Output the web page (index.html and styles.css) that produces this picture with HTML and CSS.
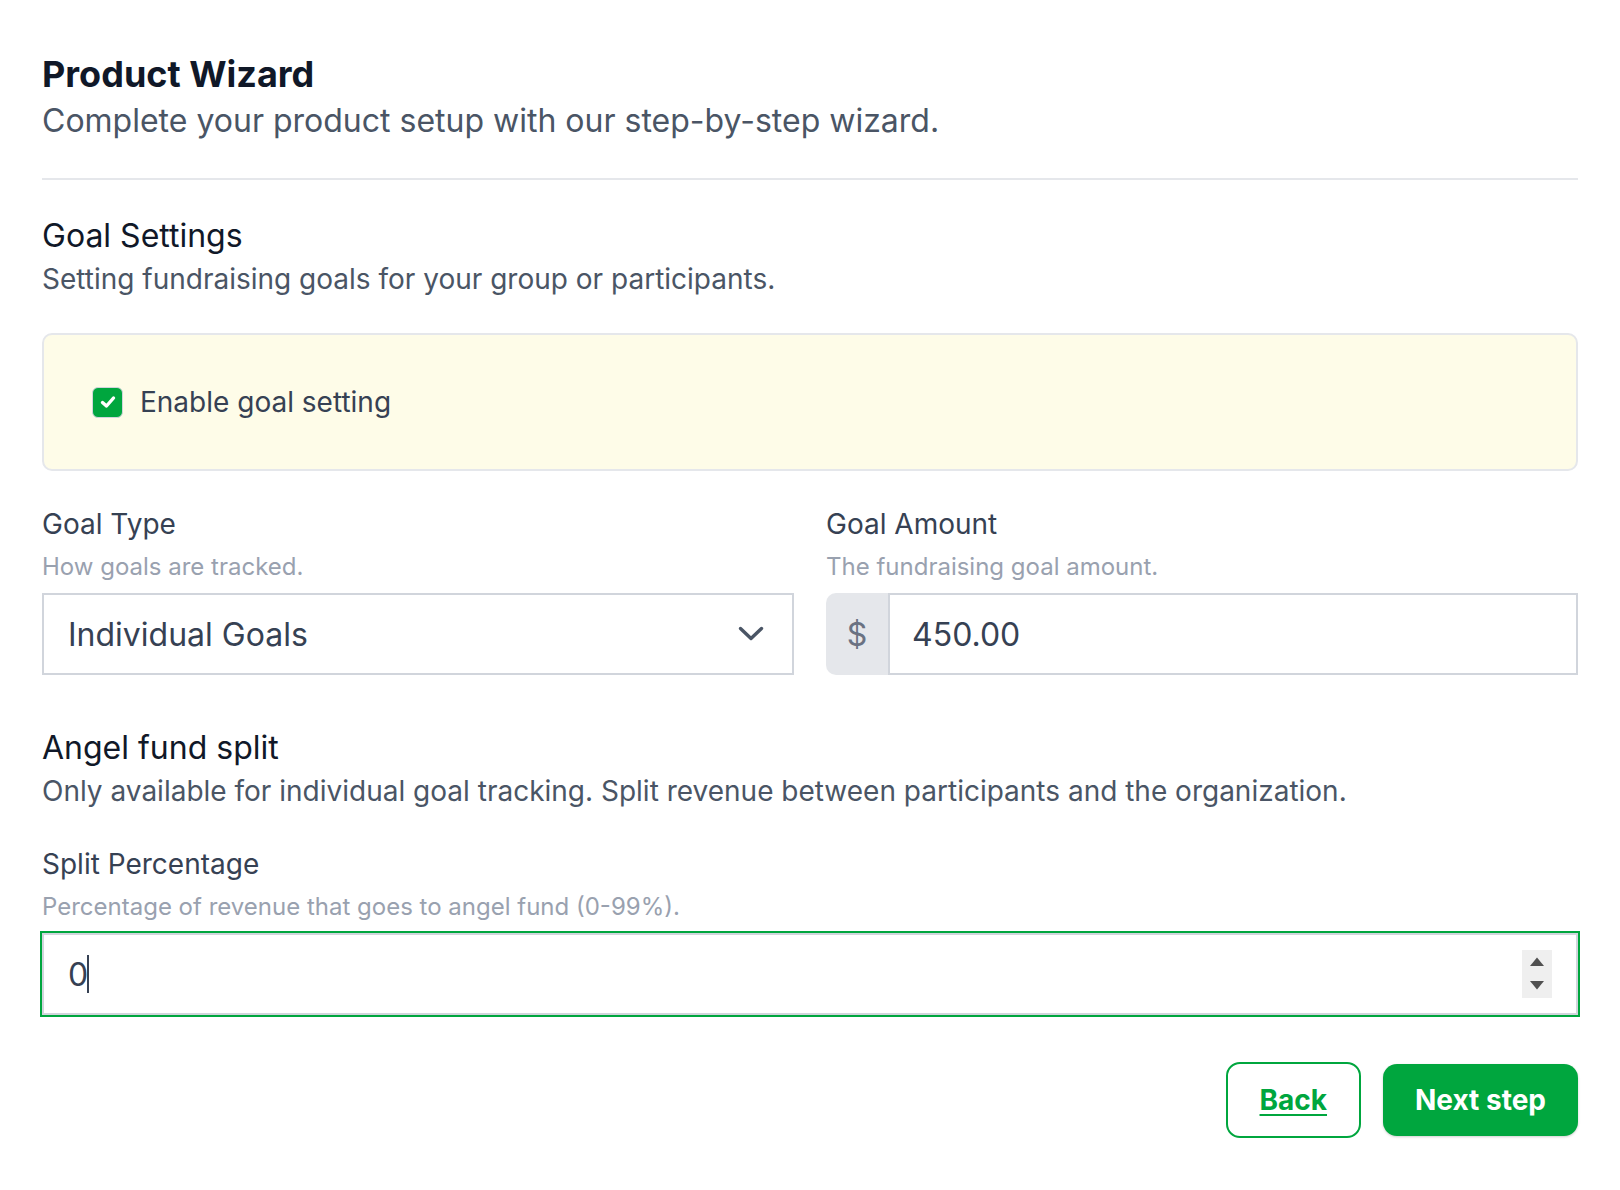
FILE: index.html
```html
<!DOCTYPE html>
<html lang="en">
<head>
<meta charset="utf-8">
<title>Product Wizard</title>
<link rel="stylesheet" href="styles.css">
</head>
<body>
<div class="page">
  <header class="header">
    <h1 class="title">Product Wizard</h1>
    <p class="subtitle">Complete your product setup with our step-by-step wizard.</p>
  </header>

  <section class="section">
    <h2 class="section-title">Goal Settings</h2>
    <p class="section-desc">Setting fundraising goals for your group or participants.</p>

    <div class="notice">
      <label class="check-row">
        <span class="checkbox">
          <svg width="20" height="20" viewBox="0 0 20 20" aria-hidden="true"><polyline points="4.5,10.5 8.5,14 15.5,6" fill="none" stroke="#ffffff" stroke-width="3.4" stroke-linecap="round" stroke-linejoin="round"/></svg>
        </span>
        <span class="check-label">Enable goal setting</span>
      </label>
    </div>

    <div class="grid">
      <div class="field">
        <div class="label">Goal Type</div>
        <div class="help">How goals are tracked.</div>
        <div class="control select">
          <span class="value">Individual Goals</span>
          <svg class="chevron" width="26" height="16" viewBox="0 0 26 16" aria-hidden="true"><polyline points="2.5,2.5 13,12.5 23.5,2.5" fill="none" stroke="#4a5565" stroke-width="3.4" stroke-linecap="round" stroke-linejoin="round"/></svg>
        </div>
      </div>
      <div class="field">
        <div class="label">Goal Amount</div>
        <div class="help">The fundraising goal amount.</div>
        <div class="input-group">
          <span class="addon">$</span>
          <div class="control input grow amount"><span class="value">450.00</span></div>
        </div>
      </div>
    </div>
  </section>

  <section class="section angel">
    <h2 class="section-title">Angel fund split</h2>
    <p class="section-desc">Only available for individual goal tracking. Split revenue between participants and the organization.</p>

    <div class="field split">
      <div class="label">Split Percentage</div>
      <div class="help">Percentage of revenue that goes to angel fund (0-99%).</div>
      <div class="control input focused">
        <span class="value">0</span><span class="caret"></span>
        <span class="spacer"></span>
        <svg class="spinner" width="30" height="48" viewBox="0 0 30 48" aria-hidden="true">
          <rect x="0" y="0" width="30" height="48" fill="#efefef"/>
          <polygon points="8,16 22,16 15,7.5" fill="#505050"/>
          <polygon points="8,31 22,31 15,39.5" fill="#505050"/>
        </svg>
      </div>
    </div>
  </section>

  <div class="actions">
    <a class="btn btn-outline" href="#">Back</a>
    <button class="btn btn-primary" type="button">Next step</button>
  </div>
</div>
</body>
</html>
```

FILE: styles.css
```css
* {
  box-sizing: border-box;
}

html, body {
  margin: 0;
  padding: 0;
  background: #ffffff;
}

body {
  font-family: Inter, "Noto Sans", "Liberation Sans", sans-serif;
  color: #101828;
}

.page {
  padding: 52px 42px 40px;
}

.header {
  padding-bottom: 35px;
  border-bottom: 2px solid #e5e7eb;
}

.title {
  margin: 0;
  font-size: 36px;
  line-height: 44px;
  font-weight: 700;
  color: #101828;
}

.subtitle {
  margin: 3px 0 0;
  font-size: 32px;
  line-height: 44px;
  font-weight: 400;
  color: #4a5565;
}

.section {
  margin-top: 32px;
}

.section.angel {
  margin-top: 49px;
}

.section-title {
  margin: 0;
  padding-top: 1px;
  font-size: 32px;
  line-height: 45px;
  font-weight: 400;
  color: #101828;
}

.section-desc {
  margin: 0;
  padding-top: 1px;
  font-size: 28px;
  line-height: 41px;
  color: #4a5565;
}

.notice {
  margin-top: 33px;
  background: #fefce8;
  border: 2px solid #e5e7eb;
  border-radius: 10px;
  padding: 46px 48px;
}

.check-row {
  display: flex;
  align-items: center;
  gap: 17px;
}

.checkbox {
  width: 31px;
  height: 31px;
  border-radius: 6px;
  background: #00a63e;
  border: 1.5px solid #d1d5dc;
  display: flex;
  align-items: center;
  justify-content: center;
}

.checkbox svg {
  display: block;
}

.check-label {
  font-size: 28px;
  line-height: 42px;
  color: #364153;
}

.grid {
  margin-top: 32px;
  display: grid;
  grid-template-columns: 1fr 1fr;
  gap: 32px;
}

.label {
  font-size: 28px;
  line-height: 42px;
  color: #364153;
}

.help {
  margin-top: 4px;
  font-size: 24px;
  line-height: 36px;
  color: #99a1af;
}

.control {
  margin-top: 8px;
  height: 82px;
  border: 2px solid #d1d5dc;
  background: #ffffff;
  display: flex;
  align-items: center;
  padding: 0 24px;
  font-size: 32px;
  color: #364153;
}

.select {
  justify-content: space-between;
  padding-right: 28px;
}

.chevron {
  display: block;
}

.input-group {
  margin-top: 8px;
  display: flex;
  height: 82px;
}

.input-group .control {
  margin-top: 0;
}

.amount {
  padding-left: 22px;
}

.addon {
  width: 62px;
  flex: none;
  background: #e5e7eb;
  border-radius: 10px 0 0 10px;
  display: flex;
  align-items: center;
  justify-content: center;
  font-size: 32px;
  color: #6a7282;
}

.grow {
  flex: 1;
}

.split {
  margin-top: 31px;
}

.focused {
  outline: 2px solid #00a63e;
  padding-right: 24px;
}

.caret {
  width: 1.5px;
  height: 38px;
  background: #364153;
  margin-left: -1px;
}

.spacer {
  flex: 1;
}

.spinner {
  display: block;
}

.actions {
  margin-top: 47px;
  display: flex;
  justify-content: flex-end;
  align-items: center;
  gap: 22px;
}

.btn {
  font-family: Inter, "Noto Sans", "Liberation Sans", sans-serif;
  font-size: 28px;
  line-height: 40px;
  font-weight: 700;
  border-radius: 14px;
  padding: 16px 32px;
  cursor: pointer;
}

.btn-outline {
  display: inline-block;
  border: 2px solid #00a63e;
  color: #00a63e;
  background: #ffffff;
  padding: 16px 32px;
  text-decoration: underline;
  text-decoration-thickness: 2px;
  text-underline-offset: 4px;
}

.btn-primary {
  border: none;
  background: #00a63e;
  color: #ffffff;
  box-shadow: 0 1px 3px rgba(0, 0, 0, 0.12), 0 1px 2px rgba(0, 0, 0, 0.08);
}
```
